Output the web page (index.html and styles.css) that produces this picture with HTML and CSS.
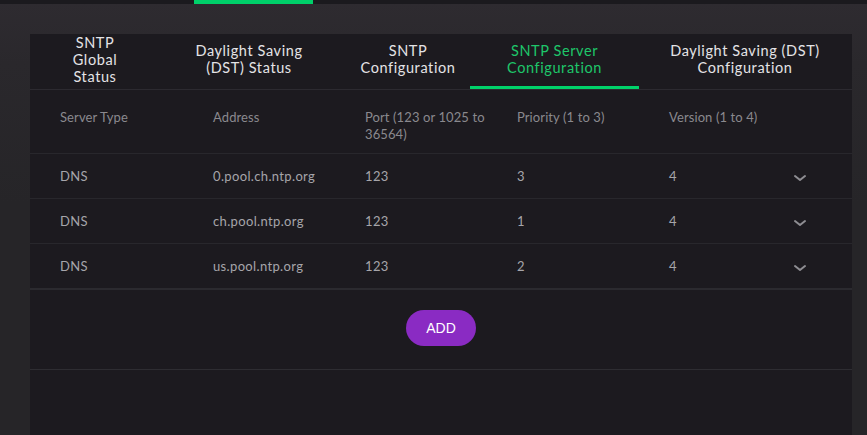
FILE: index.html
```html
<!DOCTYPE html>
<html>
<head>
<meta charset="utf-8">
<link rel="stylesheet" href="styles.css">
</head>
<body>
<div class="topbar"><div class="topbar-active"></div></div>
<div class="page">
  <div class="panel">
    <div class="tabs">
      <div class="tab t1">SNTP<br>Global<br>Status</div>
      <div class="tab t2">Daylight Saving<br>(DST) Status</div>
      <div class="tab t3">SNTP<br>Configuration</div>
      <div class="tab t4 active">SNTP Server<br>Configuration</div>
      <div class="tab t5">Daylight Saving (DST)<br>Configuration</div>
    </div>
    <div class="row head">
      <div>Server Type</div>
      <div>Address</div>
      <div>Port (123 or 1025 to<br>36564)</div>
      <div>Priority (1 to 3)</div>
      <div>Version (1 to 4)</div>
      <div></div>
    </div>
    <div class="row">
      <div>DNS</div><div>0.pool.ch.ntp.org</div><div>123</div><div>3</div><div>4</div>
      <div class="chev"><svg width="14" height="8" viewBox="0 0 14 8"><path d="M2 2 L7 6 L12 2" fill="none" stroke="#8e8d92" stroke-width="2" stroke-linecap="round" stroke-linejoin="round"/></svg></div>
    </div>
    <div class="row">
      <div>DNS</div><div>ch.pool.ntp.org</div><div>123</div><div>1</div><div>4</div>
      <div class="chev"><svg width="14" height="8" viewBox="0 0 14 8"><path d="M2 2 L7 6 L12 2" fill="none" stroke="#8e8d92" stroke-width="2" stroke-linecap="round" stroke-linejoin="round"/></svg></div>
    </div>
    <div class="row last">
      <div>DNS</div><div>us.pool.ntp.org</div><div>123</div><div>2</div><div>4</div>
      <div class="chev"><svg width="14" height="8" viewBox="0 0 14 8"><path d="M2 2 L7 6 L12 2" fill="none" stroke="#8e8d92" stroke-width="2" stroke-linecap="round" stroke-linejoin="round"/></svg></div>
    </div>
    <div class="actions">
      <button class="add">ADD</button>
    </div>
    <div class="footer"></div>
  </div>
</div>
</body>
</html>
```

FILE: styles.css
```css
html, body {
  margin: 0;
  padding: 0;
  height: 100%;
  overflow: hidden;
}
body {
  background: #27262a;
  font-family: Lato, "Liberation Sans", sans-serif;
}
.topbar {
  height: 4px;
  background: #1b1a1e;
  padding-left: 194px;
}
.topbar-active {
  width: 119px;
  height: 4px;
  background: #00d06a;
}
.page {
  height: 431px;
  padding: 30px 15px 0 30px;
  box-sizing: border-box;
  background: linear-gradient(#2e2b30 0px, #2a282c 60px, #262528 200px, #262528 100%);
}
.panel {
  width: 822px;
  height: 401px;
  background: #1c1a1f;
}
.tabs {
  display: flex;
  height: 56px;
  border-bottom: 1px solid #2c2a30;
  box-sizing: border-box;
}
.tab {
  display: flex;
  align-items: center;
  justify-content: center;
  text-align: center;
  color: #e4e3e6;
  font-size: 14.5px;
  line-height: 17px;
  letter-spacing: 0.6px;
  padding-bottom: 5px;
  box-sizing: border-box;
}
.t1 { width: 130px; padding-bottom: 4px; }
.t2 { width: 178px; }
.t3 { width: 132px; padding-left: 8px; }
.t4 { width: 169px; }
.t5 { width: 212px; }
.tab.active {
  color: #1ec66a;
  border-bottom: 3px solid #00d26a;
  padding-bottom: 2px;
}
.row {
  display: grid;
  grid-template-columns: 153px 152px 152px 152px 119px 24px;
  padding: 0 0 0 30px;
  height: 45px;
  align-items: center;
  border-bottom: 1px solid #28272c;
  box-sizing: border-box;
  color: #a6a5aa;
  font-size: 13px;
  letter-spacing: 0.35px;
}
.row.head {
  height: 64px;
  align-items: start;
  padding-top: 19px;
  color: #8a898e;
  line-height: 17px;
  letter-spacing: 0.1px;
}
.row.last {
  height: 46px;
  border-bottom: 2px solid #2b2a2f;
}
.chev {
  display: flex;
  justify-content: center;
  padding-top: 3px;
}
.actions {
  display: flex;
  justify-content: center;
  padding: 20px 0 23px 0;
  border-bottom: 1px solid #2e2d32;
}
.add {
  width: 70px;
  height: 36px;
  border: none;
  border-radius: 18px;
  background: #8a2bc3;
  color: #ffffff;
  font-family: "Liberation Sans", Arial, sans-serif;
  font-size: 14px;
  padding: 0;
}
```
